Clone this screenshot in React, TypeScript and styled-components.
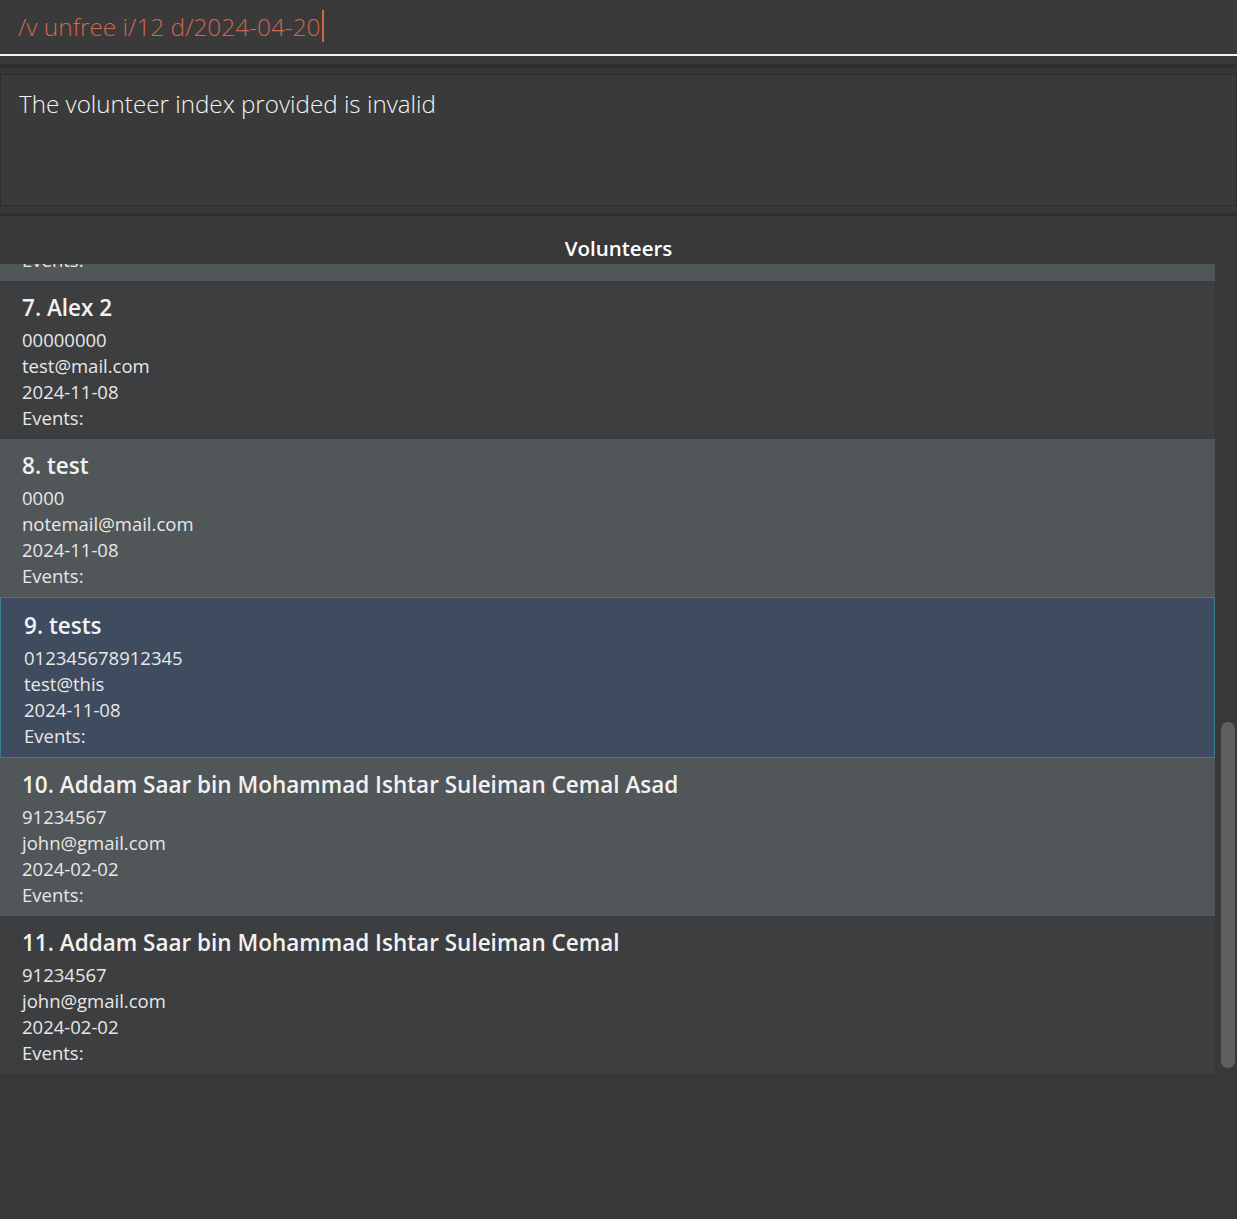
import React, { useEffect, useRef } from 'react';
import styled, { createGlobalStyle, css } from 'styled-components';

const GlobalStyle = createGlobalStyle`
  html, body {
    margin: 0;
    padding: 0;
    background-color: #383838;
    font-family: 'Open Sans', 'Noto Sans', sans-serif;
  }
`;

const Window = styled.div`
  width: 1237px;
  height: 1219px;
  display: flex;
  flex-direction: column;
  background-color: #383838;
`;

const CommandBox = styled.div`
  height: 56px;
  box-sizing: border-box;
  display: flex;
  align-items: center;
  padding-left: 18px;
  padding-bottom: 2px;
  background-color: #3a3a3a;
  border-bottom: 2px solid #f2f2f2;
  font-size: 24.4px;
  font-weight: 300;
  color: #d2664f;
`;

const Caret = styled.span`
  display: inline-block;
  width: 2px;
  height: 32px;
  margin-left: 1px;
  background-color: #d2664f;
`;

const Splitter = styled.div`
  height: 18px;
  box-sizing: border-box;
  background-color: #383838;
  border-top: 8px solid #393939;
  border-bottom: 6px solid #363636;
  display: flex;
  flex-direction: column;
  &::after {
    content: '';
    height: 4px;
    background-color: #2f2f2f;
  }
`;

const ResultBox = styled.div`
  height: 132px;
  box-sizing: border-box;
  padding: 12px 18px;
  background-color: #3a3a3a;
  border: 1px solid #2d2d2d;
  font-size: 24.2px;
  font-weight: 300;
  color: #f4f4f4;
`;

const LowerSplitter = styled.div`
  height: 10px;
  box-sizing: border-box;
  background-color: #383838;
  border-top: 6px solid #393939;
  border-bottom: 3px solid #2f2f2f;
`;

const PanelTitle = styled.div`
  height: 48px;
  display: flex;
  align-items: flex-end;
  justify-content: center;
  padding-bottom: 2px;
  box-sizing: border-box;
  font-size: 20.5px;
  font-weight: 600;
  color: #ffffff;
`;

const ListArea = styled.div`
  height: 810px;
  display: flex;
`;

const ListViewport = styled.div`
  flex: 1;
  overflow: hidden;
`;

const Track = styled.div`
  width: 22px;
  display: flex;
  flex-direction: column;
  align-items: center;
  background-color: #383838;
`;

const Thumb = styled.div`
  width: 14px;
  margin: auto 0 6px 3px;
  border-radius: 7px;
  background-color: #5f5f5f;
`;

const Cell = styled.div<{ $even: boolean; $selected: boolean }>`
  height: 158px;
  box-sizing: border-box;
  padding: 12px 22px 8px;
  background-color: ${(p) => (p.$even ? '#515658' : '#3c3e40')};
  color: #ececec;
  ${(p) =>
    p.$selected &&
    css`
      height: 161px;
      padding: 13px 22px 8px 23px;
      background-color: #3f4b5e;
      border: 1px solid #3b7d94;
    `}
`;

const Name = styled.div`
  height: 30px;
  line-height: 30px;
  margin-bottom: 4px;
  font-size: 22.5px;
  font-weight: 600;
  color: #f2f2f2;
  white-space: nowrap;
`;

const Detail = styled.div`
  height: 26px;
  line-height: 26px;
  font-size: 18.5px;
  color: #e8e8e8;
`;

type Volunteer = {
  name: string;
  phone: string;
  email: string;
  date: string;
};

const volunteers: Volunteer[] = [
  { name: 'Alex Yeoh', phone: '87438807', email: 'alexyeoh@example.com', date: '2024-01-01' },
  { name: 'Bernice Yu', phone: '99272758', email: 'berniceyu@example.com', date: '2024-01-01' },
  { name: 'Charlotte Oliveiro', phone: '93210283', email: 'charlotte@example.com', date: '2024-01-01' },
  { name: 'David Li', phone: '91031282', email: 'lidavid@example.com', date: '2024-01-01' },
  { name: 'Irfan Ibrahim', phone: '92492021', email: 'irfan@example.com', date: '2024-01-01' },
  { name: 'Roy Balakrishnan', phone: '92624417', email: 'royb@example.com', date: '2024-01-01' },
  { name: 'Alex 2', phone: '00000000', email: 'test@mail.com', date: '2024-11-08' },
  { name: 'test', phone: '0000', email: 'notemail@mail.com', date: '2024-11-08' },
  { name: 'tests', phone: '012345678912345', email: 'test@this', date: '2024-11-08' },
  { name: 'Addam Saar bin Mohammad Ishtar Suleiman Cemal Asad', phone: '91234567', email: 'john@gmail.com', date: '2024-02-02' },
  { name: 'Addam Saar bin Mohammad Ishtar Suleiman Cemal', phone: '91234567', email: 'john@gmail.com', date: '2024-02-02' },
];

const SELECTED = 8;
const VIEWPORT = 810;
const CONTENT = volunteers.length * 158 + 3;
// thumb size scaled from how much of the list fits in view
const THUMB = Math.round((VIEWPORT / CONTENT) * 744);

const App: React.FC = () => {
  const listRef = useRef<HTMLDivElement>(null);

  useEffect(() => {
    if (listRef.current) listRef.current.scrollTop = listRef.current.scrollHeight;
  }, []);

  return (
    <Window>
      <GlobalStyle />
      <CommandBox>
        /v unfree i/12 d/2024-04-20
        <Caret />
      </CommandBox>
      <Splitter />
      <ResultBox>The volunteer index provided is invalid</ResultBox>
      <LowerSplitter />
      <PanelTitle>Volunteers</PanelTitle>
      <ListArea>
        <ListViewport ref={listRef}>
          {volunteers.map((v, i) => (
            <Cell key={i} $even={i % 2 === 1} $selected={i === SELECTED}>
              <Name>
                {i + 1}. {v.name}
              </Name>
              <Detail>{v.phone}</Detail>
              <Detail>{v.email}</Detail>
              <Detail>{v.date}</Detail>
              <Detail>Events:</Detail>
            </Cell>
          ))}
        </ListViewport>
        <Track>
          <Thumb style={{ height: THUMB }} />
        </Track>
      </ListArea>
    </Window>
  );
};

export default App;
